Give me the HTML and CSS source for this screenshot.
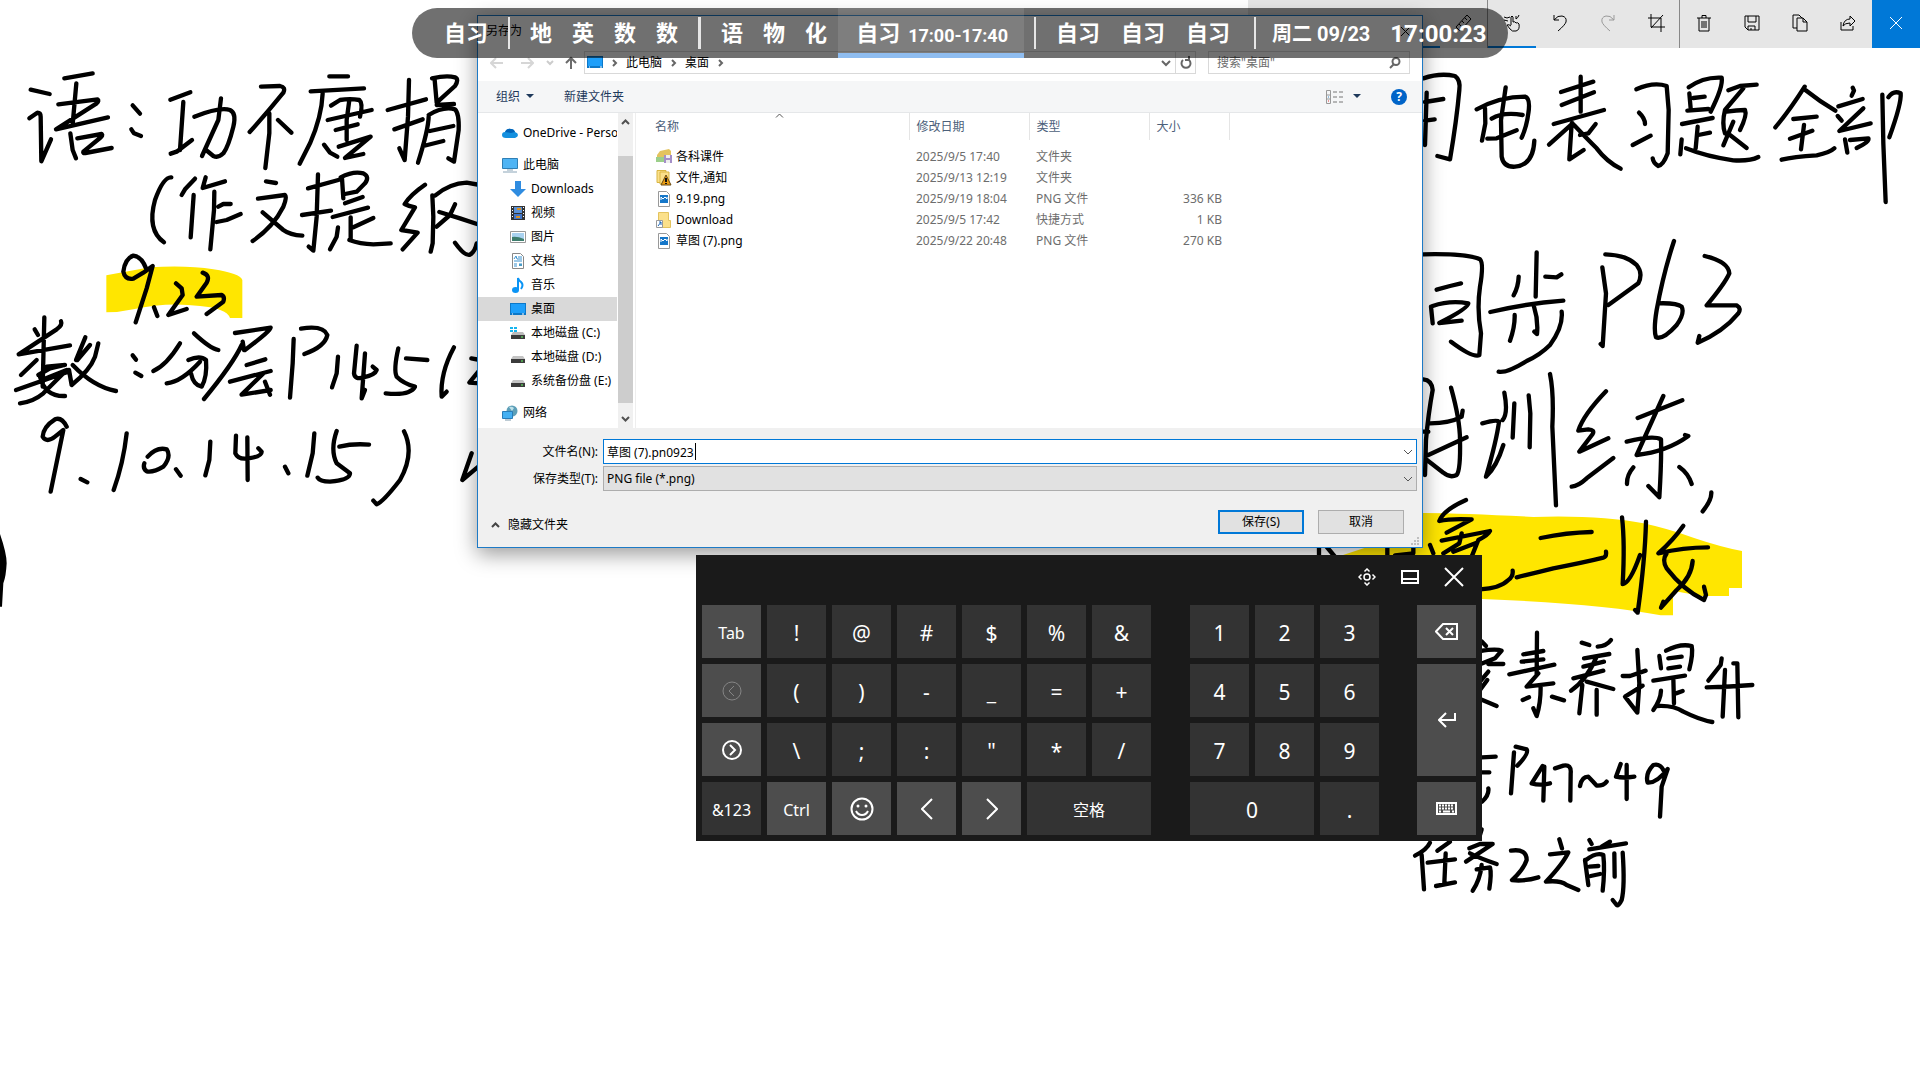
FILE: index.html
```html
<!DOCTYPE html>
<html lang="zh-CN">
<head>
<meta charset="utf-8">
<meta name="viewport" content="width=device-width, initial-scale=1">
<title>草图</title>
<link rel="stylesheet" href="styles.css">
</head>
<body>
<main class="desktop">

<svg class="ink" role="img" aria-label="手写作业草图">
  <!-- left notes, upper -->
  <svg x="0" y="50" width="490" height="240" viewBox="0 0 1470 720" overflow="visible">
    <path class="marker" d="M319 676L450 652Q560 645 640 658Q720 670 727 690V804H690Q680 775 600 768Q500 755 400 778Q360 787 319 787Z"/>
    <path d="M92 119L149 132M88 205L112 188Q122 188 122 200L124 334L153 268M193 85L278 70M229 100L218 222M175 163L293 148Q298 152 290 160L168 238L324 202M211 250L218 300L228 325M232 265L305 252Q310 256 300 264L250 305Q248 310 256 309L335 294M398 166L420 191M394 238L402 250L423 258"/>
    <path d="M511 149L571 127M550 156L540 300M512 311L530 305L576 270M663 145L655 210L606 318M583 200Q660 170 690 180Q710 190 700 230Q685 290 670 310Q655 325 640 318L618 300"/>
    <path d="M783 110L840 108Q858 112 850 128Q800 190 749 246M808 190V250L796 354M834 210L874 248"/>
    <path d="M988 79H1044M932 124L1092 115M968 130Q965 200 930 280L899 341M993 167L1020 150Q1050 145 1078 150Q1090 160 1080 200M983 210L1115 180M1048 150L1040 210V270M1007 240L1073 223M1016 290L1112 260L1035 324L1090 312M972 284L990 308L1012 320"/>
    <path d="M1227 90L1224 200L1214 330L1198 295M1163 180L1278 148M1183 238L1268 208M1296 85Q1340 75 1365 82Q1378 88 1365 108L1310 158L1304 90M1310 165L1362 162M1286 200Q1285 240 1254 338M1286 195Q1330 168 1365 178Q1378 190 1376 240L1362 335L1345 325M1290 243L1360 228M1270 288L1330 273"/>
    <path d="M514 382Q490 380 465 450Q440 540 492 577M585 386L555 418L545 435M581 435L572 562M617 382L608 414L675 394M643 425L642 480L631 598M655 470L670 462H692M650 516L680 510L722 492"/>
    <path d="M798 394L828 399M774 446L855 435Q862 440 850 470Q820 530 758 573M788 487L850 540Q870 555 907 557"/>
    <path d="M954 373L950 500L940 602L926 590M924 415L1015 390M906 495L993 482M1022 382Q1060 362 1090 370Q1110 380 1095 400L1070 425L1035 432M1026 385L1030 445M1035 460L1088 441M998 501L1104 473M1052 502V570M1060 532L1120 504M1014 532L1010 560L990 598M1048 570Q1080 582 1120 583L1172 580"/>
    <path d="M1275 404Q1230 435 1214 462Q1225 468 1245 472L1204 540L1253 548L1208 598M1297 436L1300 500L1298 580L1292 605M1306 436Q1350 400 1400 398L1440 405M1318 486L1380 505L1440 525M1365 463L1350 495L1310 530M1365 578Q1395 620 1410 614Q1425 605 1430 580"/>
    <path d="M438 655Q425 620 400 617Q375 625 370 665Q375 690 400 686L430 668L458 648L440 715L407 817M462 772L472 798M528 700L545 715L548 735L505 795L560 777M608 668Q632 676 620 698L590 740L665 735Q675 740 670 755L620 792"/>
  </svg>
  <!-- left notes, lower -->
  <svg x="0" y="290" width="490" height="330" viewBox="0 0 1470 990" overflow="visible">
    <path d="M133 82L128 290M104 118L114 135M183 94Q188 105 170 118L56 193L210 166M110 210L63 255M48 300L205 245M115 255L150 235L195 225L140 230M125 270L200 240L130 310Q100 335 60 340M120 260Q135 320 195 318M256 142L228 210M295 160L285 200Q270 240 215 285L207 240M232 210L270 165M218 225Q280 290 348 303M398 196L408 209M406 248L424 258"/>
    <path d="M540 160Q500 225 460 243M582 130Q630 175 655 180M565 210Q600 195 618 210Q622 260 605 290Q580 285 573 250M600 215Q545 275 500 280"/>
    <path d="M705 129L812 113Q815 120 735 180M728 155L732 180M725 165Q700 220 612 327M740 225L796 208M690 275L812 243M790 250L725 314L812 300M795 275L810 314"/>
    <path d="M881 147L878 220L870 323M903 116Q970 105 982 135Q975 170 913 192M1014 200L1010 250L996 292M1070 167L1062 250Q1065 270 1090 262Q1125 255 1130 240L1118 230M1095 190L1085 325L1095 300M1195 175Q1180 240 1190 260Q1210 280 1245 290Q1230 318 1157 310M1218 205L1282 210M1362 172Q1320 250 1325 320L1340 305M1414 205L1440 210M1435 245L1408 278L1440 280"/>
    <path d="M200 410Q185 380 165 388Q130 410 128 440Q140 460 165 440L190 420Q180 470 152 605M242 567L262 577M380 430Q370 520 341 600M443 500Q470 470 500 478Q515 500 490 530Q460 548 440 544Q428 535 433 520M528 538L542 557M631 455L628 510L616 556M708 437L706 490Q715 510 745 505Q785 500 785 485L775 475M742 442L743 570M855 530L865 550M943 430L938 490L922 557M1010 423Q990 480 1010 520L1050 550Q1050 570 990 575Q960 575 953 563M1018 470Q1060 460 1107 464M1212 424Q1245 490 1200 570Q1150 635 1130 643L1120 632M1415 490L1387 570L1435 530"/>
    <path class="blot" d="M0 732Q20 790 20 820Q18 860 10 880L6 950H0Z"/>
  </svg>
  <!-- right notes, upper -->
  <svg x="1400" y="60" width="520" height="320" viewBox="0 0 1560 960" overflow="visible">
    <path d="M70 55Q120 38 165 48Q182 60 178 90Q170 180 150 298L112 288M80 98L75 255M75 126L130 117M75 182L104 178"/>
    <path d="M317 82L303 180L305 290Q310 322 345 320Q400 315 403 242M230 148Q300 110 375 110Q392 115 385 160Q380 200 365 233M255 145L256 190L246 242M275 176Q310 155 368 165M262 236L290 235L350 211"/>
    <path d="M483 96L580 65M542 50V155M485 135L582 97M461 192L612 150M518 190L447 254M515 190L508 298L551 270M522 195Q560 235 590 265Q620 305 662 326M540 225L565 220L587 192"/>
    <path d="M709 88Q760 65 800 78L806 150L803 280Q790 315 775 318Q760 310 758 295M717 158Q735 175 735 192M698 255L752 227"/>
    <path d="M866 82Q910 50 965 53Q970 80 932 155M868 100L872 145M880 114L914 110M862 152L925 147M846 192L938 174M893 200L887 265M895 225L930 218M845 238L841 283M858 265Q920 290 1000 301Q1050 304 1075 291M985 91L1020 78L1070 74M1030 85L975 150Q965 190 975 220M980 155Q1010 150 1035 150Q1042 165 1020 210M1000 185L970 256M990 225L1040 264"/>
    <path d="M1214 80Q1170 150 1126 202M1216 90Q1260 125 1306 152M1180 177L1250 170M1212 195L1203 268M1170 236L1237 212M1145 299Q1180 290 1250 286Q1290 278 1303 265"/>
    <path d="M1358 83L1362 92L1355 107M1315 139L1388 117M1313 168L1325 182M1390 145L1318 213L1412 190M1335 238L1342 278M1350 240L1405 235Q1410 245 1370 264M1447 104L1450 250L1457 426M1465 112Q1480 90 1502 100Q1505 130 1468 232"/>
    <path d="M70 583Q200 580 240 598Q252 610 240 680Q230 750 243 820L238 885Q220 895 153 845M110 689L150 678L183 670M93 740L98 790M98 738Q150 720 205 730Q205 745 118 789L185 782"/>
    <path d="M410 577L407 710M356 650Q355 680 341 706M436 650L470 652L484 643M271 756Q380 730 490 722M344 765Q345 800 330 842M402 740Q415 780 411 822L403 815M485 755Q490 800 450 855Q420 885 380 903Q320 940 296 935"/>
    <path d="M607 622L618 700L608 858L602 852M616 583Q680 585 710 615Q730 640 715 670L625 735M822 543Q790 640 770 750Q760 810 768 832Q790 840 830 795Q855 760 845 740Q830 728 775 730M914 588Q985 605 988 640Q975 670 920 736H1010Q1025 745 1015 760Q970 815 893 848L898 828"/>
  </svg>
  <!-- right notes, middle -->
  <svg x="1300" y="360" width="500" height="270" viewBox="0 0 1500 810" overflow="visible">
    <path class="marker" d="M120 588L200 562L370 459Q500 460 700 471Q900 465 1030 490Q1100 505 1180 533Q1260 560 1326 573V684H1287V708H1205Q1160 700 1119 692V766H1082Q900 730 546 717L300 700Z"/>
    <path d="M370 58Q395 60 398 90Q385 160 378 240L375 345M453 83Q480 180 480 240Q482 330 470 345Q450 355 430 338L378 298M390 190Q450 190 485 170L488 152M385 285L500 232M370 215H385"/>
    <path d="M547 190Q590 178 597 185Q590 240 558 350Q590 320 610 255M613 98Q625 160 608 180M643 130L638 233M686 106L691 160L689 262M750 42Q762 100 757 200L768 436"/>
    <path d="M918 94Q850 165 835 212L865 208Q885 210 878 222L838 275L925 235M815 380Q835 378 860 355L940 294M1090 108L1010 285Q1100 275 1165 228L1155 225M1013 174L1147 121M980 245Q1060 225 1083 238Q1085 300 1078 412L1045 378M1000 322Q980 345 981 372M1138 321Q1165 340 1175 372M1234 397Q1235 420 1208 454"/>
    <path d="M498 420Q430 450 418 483Q450 475 515 478L440 518M425 542L570 513Q565 525 535 540L515 590M485 520L478 550L430 580M390 555L400 580M460 575L530 548M540 688Q600 685 625 660Q640 650 638 632"/>
    <path d="M722 534Q800 518 875 516M650 652Q700 640 760 625Q850 608 910 593Q920 590 918 575"/>
    <path d="M966 472Q975 550 968 672Q990 670 1020 585M1038 485Q1035 600 1013 758L1005 750M1150 497Q1120 540 1075 580Q1150 562 1224 562M1100 580Q1085 600 1100 625Q1150 690 1212 720L1218 705L1212 680M1178 603Q1175 650 1130 690L1083 743L1090 725"/>
    <path d="M57 555V600M78 558L108 594M262 555V600M285 586L340 580V555"/>
  </svg>
  <!-- right notes, lower -->
  <svg x="1380" y="620" width="420" height="300" viewBox="0 0 1260 900" overflow="visible">
    <path d="M306 65L318 78M300 93Q350 85 365 92L345 115L300 133M325 132H370M325 155L300 185M322 180L300 210M300 237L350 258"/>
    <path d="M471 38L470 165M430 103L490 93M425 125L490 118M388 163L523 134M475 160L440 200L520 190M482 200Q482 250 470 288L460 265M428 240L447 232M516 230L552 241"/>
    <path d="M605 68L628 75M653 80Q680 78 693 60M612 115L688 102M610 140L672 125M580 175L670 152M650 110Q620 180 573 212M620 185L700 207M607 195L598 280M650 210V284"/>
    <path d="M772 90L778 190L772 278L735 230L788 197M728 168H750L797 152M838 108L843 145M858 92Q900 70 935 78Q940 100 928 148M865 115L905 110M865 145L900 140M820 182L915 167M880 175L882 250M888 220L908 213M843 212Q842 240 820 270M830 258Q880 255 910 275Q960 300 997 306"/>
    <path d="M1025 115L1022 135L985 182M1035 150L1028 290M980 202Q1050 200 1117 195M1060 130H1072L1075 292"/>
    <path d="M306 412L347 410M306 457H328M325 505Q328 525 306 545M402 397L393 520M407 380L440 388Q448 400 412 437M488 438L455 490Q480 498 510 490M493 440L490 542M525 445L550 437Q575 432 572 460L571 542M600 498Q605 470 625 470Q640 485 650 497Q670 498 680 485M722 432L708 470Q730 475 763 470M740 435V537M850 450Q840 430 820 435Q795 460 803 488Q830 490 863 447L845 500L840 590"/>
    <path d="M150 668Q140 690 105 707M125 705L132 808M210 665L172 692M143 728L225 718M197 700L193 790M168 798L225 787M305 628L300 645M268 685L300 672H338L258 725M270 700Q300 715 350 732M290 748L330 742Q335 760 328 806M305 735Q300 780 278 812"/>
    <path d="M393 692Q440 685 440 720Q430 750 396 780Q430 785 475 772M538 658L546 685M510 703L565 697Q550 730 498 785Q540 780 560 795L595 810"/>
    <path d="M628 660L635 672M690 665L665 680M628 688L738 670M615 720L625 795M618 720Q650 695 670 705Q675 750 668 812M628 740L655 738M632 768L660 762M703 700L704 770M728 698Q735 800 725 840Q715 860 710 855L698 840"/>
  </svg>
</svg>

<nav class="sketchbar" aria-label="草图工具">
  <button class="tool" aria-label="圆珠笔"></button>
  <button class="tool" aria-label="铅笔"></button>
  <button class="tool" aria-label="荧光笔"></button>
  <button class="tool selected" aria-label="橡皮擦"></button>
  <button class="tool" aria-label="标尺"><svg width="18" height="18" viewBox="0 0 18 18"><path d="M1 13L12 1L16 5L5 17ZM4 10l2 2M7 7l2 2M10 4l2 2"/></svg></button>
  <button class="tool selected divided" aria-label="触摸书写"><svg width="18" height="18" viewBox="0 0 18 18"><path d="M1 3q3 2 6 0M1 6l4 1M8 11V3q1-2 2 0v5q2-1 3 1 2-1 3 1 1 6-3 7-4 1-6-2l-3-4q2-1 4 1M16 1q-1 3-3 4v-3"/></svg></button>
  <button class="tool" aria-label="撤消"><svg width="18" height="18" viewBox="0 0 18 18"><path d="M3 1v5h5M3 6q4-5 8-4 5 1 4 6-1 3-8 9"/></svg></button>
  <button class="tool dim" aria-label="恢复"><svg width="18" height="18" viewBox="0 0 18 18"><path d="M15 1v5h-5M15 6q-4-5-8-4-5 1-4 6 1 3 8 9"/></svg></button>
  <button class="tool" aria-label="裁剪"><svg width="18" height="18" viewBox="0 0 18 18"><path d="M4 0v13h14M1 4h13v14M4 14L16 1"/></svg></button>
  <button class="tool divided" aria-label="清除"><svg width="18" height="18" viewBox="0 0 18 18"><path d="M2 4h14M7 4V1.500h4V4M4 4v13h10V4M7 7v7M9 7v7M11 7v7"/></svg></button>
  <button class="tool" aria-label="保存"><svg width="18" height="18" viewBox="0 0 18 18"><path d="M2 2h14v14H5l-3-3ZM5 2v6h8V2M5 16v-4h7v4M8 14v2"/></svg></button>
  <button class="tool" aria-label="复制"><svg width="18" height="18" viewBox="0 0 18 18"><path d="M6 14H2V1h6l3 3M6 4h6l4 4v9H6ZM12 4v4h4"/></svg></button>
  <button class="tool" aria-label="共享"><svg width="18" height="18" viewBox="0 0 18 18"><path d="M2 8v8h12v-4M4 12q1-7 7-7V2l5 5-5 5V9q-5 0-7 3Z"/></svg></button>
  <button class="tool exit" aria-label="关闭"><svg width="18" height="18" viewBox="0 0 18 18"><path d="M3 3l12 12M15 3L3 15"/></svg></button>
</nav>

<section class="dialog" role="dialog" aria-label="另存为">
  <header class="titlebar"><span>另存为</span><button class="plain" aria-label="关闭"><svg width="11" height="11" viewBox="0 0 11 11"><path d="M1 1l9 9M10 1l-9 9" stroke="#000"/></svg></button></header>
  <div class="navrow">
    <button class="plain back" aria-label="后退"><svg width="14" height="12" viewBox="0 0 14 12"><path d="M6 1L1 6l5 5M1 6h12" stroke="#d6d6d6" stroke-width="2"/></svg></button>
    <button class="plain forward" aria-label="前进"><svg width="14" height="12" viewBox="0 0 14 12"><path d="M8 1l5 5-5 5M13 6H1" stroke="#d6d6d6" stroke-width="2"/></svg></button>
    <button class="plain recent" aria-label="最近位置"><svg width="8" height="6" viewBox="0 0 8 6"><path d="M1 1l3 3 3-3" stroke="#ccc" stroke-width="2"/></svg></button>
    <button class="plain up" aria-label="上移"><svg width="13" height="14" viewBox="0 0 13 14"><path d="M1 7l5-5 5 5M6 2v11" stroke="#6b6b6b" stroke-width="2"/></svg></button>
    <div class="address">
      <svg width="16" height="13" viewBox="0 0 16 13"><path d="M0 0h16v12H0z" fill="#0d78c8"/><path d="M1 1h14v9H1z" fill="#1e9ffa"/><path d="M2 11h1M13 11h2" stroke="#fff"/></svg>
      <svg class="crumb" width="6" height="8" viewBox="0 0 6 8"><path d="M1 1l3 3-3 3" stroke="#666" stroke-width="2"/></svg>
      <a href="#pc">此电脑</a>
      <svg class="crumb" width="6" height="8" viewBox="0 0 6 8"><path d="M1 1l3 3-3 3" stroke="#666" stroke-width="2"/></svg>
      <a href="#desk">桌面</a>
      <svg class="crumb" width="6" height="8" viewBox="0 0 6 8"><path d="M1 1l3 3-3 3" stroke="#666" stroke-width="2"/></svg>
      <button class="plain history" aria-label="历史"><svg width="10" height="8" viewBox="0 0 10 8"><path d="M1 2l4 4 4-4" stroke="#666" stroke-width="2"/></svg></button>
      <button class="plain reload" aria-label="刷新"><svg width="12" height="14" viewBox="0 0 12 14"><path d="M3 4a4.500 4.500 0 1 0 6 0M9 0v4H5" stroke="#666" stroke-width="2"/></svg></button>
    </div>
    <label class="search"><input type="search" placeholder='搜索"桌面"' aria-label="搜索桌面"><svg width="12" height="12" viewBox="0 0 12 12"><circle cx="7" cy="4.500" r="3.500" stroke="#666" stroke-width="2"/><path d="M5 7L1 11" stroke="#666" stroke-width="2"/></svg></label>
  </div>
  <div class="commands">
    <button class="plain cmd">组织<svg width="8" height="5" viewBox="0 0 8 5"><path d="M0 0h8L4 4z" fill="#1e395b"/></svg></button>
    <button class="plain cmd">新建文件夹</button>
    <button class="plain cmd view" aria-label="更改视图"><svg width="17" height="14" viewBox="0 0 17 14"><path d="M.5.500h4v13h-4zM.5 5h4M.5 9h4" stroke="#999"/><path d="M7 2h4M13 2h4M7 7h4M13 7h4M7 12h4M13 12h4" stroke="#777"/><path d="M2 7h1" stroke="#38c"/><path d="M2 11h1" stroke="#d33"/></svg><svg width="8" height="5" viewBox="0 0 8 5"><path d="M0 0h8L4 4z" fill="#1e395b"/></svg></button>
    <button class="plain help" aria-label="帮助">?</button>
  </div>
  <div class="browser">
    <ul class="tree">
      <li class="gap"><svg width="16" height="16" viewBox="0 0 16 16"><path d="M4 13Q0 13 0 10T3 7Q5 3 9 4q3 0 4 3 3 1 3 3t-3 3z" fill="#1490df"/><path d="M3 7Q5 3 9 4q3 0 4 3L9 8z" fill="#0364b8"/></svg>OneDrive - Personal</li>
      <li><svg width="16" height="16" viewBox="0 0 16 16"><path d="M.5 1.500h15v10H.5z" fill="#4fb4f4" stroke="#2f7fb5"/><path d="M5 13h6M1 15h14" stroke="#8aa5b8"/></svg>此电脑</li>
      <li class="sub"><svg width="16" height="16" viewBox="0 0 16 16"><path d="M5 0h6v8h5l-8 8-8-8h5z" fill="#2f8ce0"/></svg>Downloads</li>
      <li class="sub"><svg width="16" height="16" viewBox="0 0 16 16"><path d="M1 1h14v14H1z" fill="#333"/><path d="M4 2h8v6H4z" fill="#5b92d8"/><path d="M4 9h8v5H4z" fill="#4276c8"/><path d="M7 3h4v2H7zM6 11h4v2H6z" fill="#d99022"/><path d="M2.500 2v12M13.500 2v12" stroke="#fff" stroke-dasharray="1 2"/></svg>视频</li>
      <li class="sub"><svg width="16" height="16" viewBox="0 0 16 16"><path d="M.5 2.500h15v11H.5z" fill="#fff" stroke="#999"/><path d="M2 4h12v8H2z" fill="#a9d2f0"/><path d="M2 8q5-1 12 2v2H2z" fill="#3d7d6d"/></svg>图片</li>
      <li class="sub"><svg width="16" height="16" viewBox="0 0 16 16"><path d="M2.500.500h8l3 3v12h-11z" fill="#fff" stroke="#888"/><path d="M8 4h4M7 6h5M4 8h8M4 11h3M4 13h3M9 11h3" stroke="#3a92cf"/><path d="M4 6l2-3 1 3" stroke="#3a92cf"/><path d="M9 11h3v2H9z" fill="#4b9cc5"/></svg>文档</li>
      <li class="sub"><svg width="16" height="16" viewBox="0 0 16 16"><ellipse cx="5.500" cy="13" rx="3.500" ry="3" fill="#0a94f5"/><path d="M8 13V1q1 3 3 4 3 3 0 7" stroke="#0a94f5" stroke-width="2"/></svg>音乐</li>
      <li class="sub current"><svg width="16" height="16" viewBox="0 0 16 16"><path d="M0 2h16v12H0z" fill="#0d78c8"/><path d="M1 3h14v9H1z" fill="#1e9ffa"/><path d="M2 13h1M12 13h2" stroke="#fff"/></svg>桌面</li>
      <li class="sub"><svg width="16" height="16" viewBox="0 0 16 16"><path d="M0 2h3v2H0zM4 2h3v2H4zM0 5h3v2H0zM4 5h3v2H4z" fill="#16b5ef"/><path d="M3 7h10l2 3H1z" fill="#bbb"/><path d="M1 10h14v4H1z" fill="#3b3b3b"/><path d="M11 12h2" stroke="#6f6"/></svg>本地磁盘 (C:)</li>
      <li class="sub"><svg width="16" height="16" viewBox="0 0 16 16"><path d="M3 7h10l2 3H1z" fill="#c4c4c4"/><path d="M1 10h14v4H1z" fill="#3b3b3b"/><path d="M11 12h2" stroke="#6f6"/></svg>本地磁盘 (D:)</li>
      <li class="sub gap"><svg width="16" height="16" viewBox="0 0 16 16"><path d="M3 7h10l2 3H1z" fill="#c4c4c4"/><path d="M1 10h14v4H1z" fill="#3b3b3b"/><path d="M11 12h2" stroke="#6f6"/></svg>系统备份盘 (E:)</li>
      <li><svg width="16" height="16" viewBox="0 0 16 16"><circle cx="10" cy="6" r="5.500" fill="#5d9fb8"/><path d="M7 2q3-1 5 1l-2 3z" fill="#bfe2ea"/><path d="M.5 6.500h10v7H.5z" fill="#45b0f2" stroke="#2a7db8"/><path d="M3 15h6" stroke="#7c98aa"/></svg>网络</li>
    </ul>
    <div class="scroll" aria-hidden="true">
      <svg width="9" height="6" viewBox="0 0 9 6"><path d="M1 5l3.500-3.500L8 5" stroke="#505050" stroke-width="2"/></svg>
      <span class="thumb"></span>
      <svg width="9" height="6" viewBox="0 0 9 6"><path d="M1 1l3.500 3.500L8 1" stroke="#505050" stroke-width="2"/></svg>
    </div>
    <div class="files">
      <svg class="sorted" width="9" height="5" viewBox="0 0 9 5"><path d="M1 4.500L4.500 1 8 4.500" stroke="#555"/></svg>
      <table>
        <thead><tr><th class="c-name">名称</th><th class="c-date">修改日期</th><th class="c-type">类型</th><th class="c-size">大小</th></tr></thead>
        <tbody>
          <tr><td><span class="file"><svg width="16" height="16" viewBox="0 0 16 16"><path d="M4 2l9-2 2 2v7H1V6z" fill="#e3c35e"/><path d="M0 8h9v5H0z" fill="#9ccf8a"/><path d="M8 6h8v8H8z" fill="#a48fc8"/><path d="M10 6h4v3h-4zM10 11h4v3h-4z" fill="#eee"/></svg>各科课件</span></td><td>2025/9/5 17:40</td><td>文件夹</td><td></td></tr>
          <tr><td><span class="file"><svg width="16" height="16" viewBox="0 0 16 16"><path d="M1 .5h9v12H1z" fill="#fbe08a" stroke="#d9b542"/><path d="M4 2h9v12H4z" fill="#fbe08a" stroke="#d9b542"/><path d="M10 5l5 10H5z" fill="#e89c14" stroke="#6b4a12"/><path d="M10 8v4M10 13v1" stroke="#111" stroke-width="2"/></svg>文件,通知</span></td><td>2025/9/13 12:19</td><td>文件夹</td><td></td></tr>
          <tr><td><span class="file"><svg width="16" height="16" viewBox="0 0 16 16"><path d="M2.500.500h8l3 3v12h-11z" fill="#fff" stroke="#999"/><path d="M4 4h8v8H4z" fill="#1577c9"/><path d="M5 9V6l2 2 2-2 2 2V6" stroke="#fff"/></svg>9.19.png</span></td><td>2025/9/19 18:04</td><td>PNG 文件</td><td>336 KB</td></tr>
          <tr><td><span class="file"><svg width="16" height="16" viewBox="0 0 16 16"><path d="M2.500.500h10v8h2v7h-12z" fill="#fbe08a" stroke="#e3c35e"/><path d="M.5 8.500h6v7h-6z" fill="#fff" stroke="#999"/><path d="M2 14l3-4M3 10h2v3" stroke="#1b66b8"/></svg>Download</span></td><td>2025/9/5 17:42</td><td>快捷方式</td><td>1 KB</td></tr>
          <tr><td><span class="file"><svg width="16" height="16" viewBox="0 0 16 16"><path d="M2.500.500h8l3 3v12h-11z" fill="#fff" stroke="#999"/><path d="M4 4h8v8H4z" fill="#1577c9"/><path d="M5 9V6l2 2 2-2 2 2V6" stroke="#fff"/></svg>草图 (7).png</span></td><td>2025/9/22 20:48</td><td>PNG 文件</td><td>270 KB</td></tr>
        </tbody>
      </table>
    </div>
  </div>
  <form class="form">
    <label for="fname">文件名(N):</label>
    <div class="field active"><input id="fname" type="text" value="草图 (7).pn0923"><i class="caret"></i><svg width="10" height="6" viewBox="0 0 10 6"><path d="M1 1l4 4 4-4" stroke="#555"/></svg></div>
    <label for="ftype">保存类型(T):</label>
    <div class="field"><select id="ftype"><option>PNG file (*.png)</option></select><svg width="10" height="6" viewBox="0 0 10 6"><path d="M1 1l4 4 4-4" stroke="#555"/></svg></div>
  </form>
  <footer class="actions">
    <button class="plain hide"><svg width="9" height="6" viewBox="0 0 9 6"><path d="M1 5l3.500-3.500L8 5" stroke="#444" stroke-width="2"/></svg>隐藏文件夹</button>
    <button class="btn default">保存(S)</button>
    <button class="btn">取消</button>
    <svg class="grip" width="9" height="9" viewBox="0 0 9 9"><path d="M6 0h2v2H6zM3 3h2v2H3zM6 3h2v2H6zM0 6h2v2H0zM3 6h2v2H3zM6 6h2v2H6z" fill="#bfbfbf"/></svg>
  </footer>
</section>

<section class="keyboard" aria-label="触摸键盘">
  <div class="kbhead">
    <button class="plain" aria-label="移动"><svg width="18" height="18" viewBox="0 0 18 18"><circle cx="9" cy="9" r="3" stroke-width="1.500"/><path d="M6.500 3.500L9 1l2.500 2.500M6.500 14.500L9 17l2.500-2.500M3.500 6.500L1 9l2.500 2.500M14.500 6.500L17 9l-2.500 2.500" stroke-width="1.500"/></svg></button>
    <button class="plain" aria-label="停靠"><svg width="18" height="14" viewBox="0 0 18 14"><path d="M1 1h16v12H1zM1 9h16" stroke-width="2"/></svg></button>
    <button class="plain" aria-label="关闭键盘"><svg width="20" height="20" viewBox="0 0 20 20"><path d="M1 1l18 18M19 1L1 19" stroke-width="2"/></svg></button>
  </div>
  <div class="keys">
    <button class="key fn word first">Tab</button><button class="key">!</button><button class="key">@</button><button class="key">#</button><button class="key">$</button><button class="key">%</button><button class="key">&amp;</button><button class="key pad">1</button><button class="key">2</button><button class="key">3</button>
    <button class="key fn side" aria-label="退格"><svg width="23" height="17" viewBox="0 0 23 17"><path d="M8 1h14v15H8L1 8.500zM11 5l7 7M18 5l-7 7" stroke-width="2"/></svg></button>
    <button class="key fn off first" aria-label="上一页"><svg width="20" height="20" viewBox="0 0 20 20"><circle cx="10" cy="10" r="9"/><path d="M12 5l-5 5 5 5"/></svg></button><button class="key">(</button><button class="key">)</button><button class="key">-</button><button class="key">_</button><button class="key">=</button><button class="key">+</button><button class="key pad">4</button><button class="key">5</button><button class="key">6</button>
    <button class="key fn side tall" aria-label="回车"><svg width="18" height="16" viewBox="0 0 18 16"><path d="M17 1v7H1M8 1L1 8l7 7" stroke-width="2"/></svg></button>
    <button class="key fn first" aria-label="下一页"><svg width="20" height="20" viewBox="0 0 20 20"><circle cx="10" cy="10" r="9" stroke-width="2"/><path d="M8 5l5 5-5 5" stroke-width="2"/></svg></button><button class="key">\</button><button class="key">;</button><button class="key">:</button><button class="key">"</button><button class="key">*</button><button class="key">/</button><button class="key pad">7</button><button class="key">8</button><button class="key">9</button>
    <button class="key word first">&amp;123</button><button class="key fn word">Ctrl</button>
    <button class="key fn" aria-label="表情"><svg width="24" height="24" viewBox="0 0 24 24"><circle cx="12" cy="12" r="10.500" stroke-width="2"/><path d="M6 14q2 4 6 4t6-4" stroke-width="2"/><circle cx="8" cy="9" r="1.500" fill="#fff" stroke="none"/><circle cx="16" cy="9" r="1.500" fill="#fff" stroke="none"/></svg></button>
    <button class="key fn" aria-label="左"><svg width="12" height="22" viewBox="0 0 12 22"><path d="M11 1L1 11l10 10" stroke-width="2"/></svg></button>
    <button class="key fn" aria-label="右"><svg width="12" height="22" viewBox="0 0 12 22"><path d="M1 1l10 10L1 21" stroke-width="2"/></svg></button>
    <button class="key wide word">空格</button><button class="key pad wide">0</button><button class="key">.</button>
    <button class="key fn side" aria-label="键盘布局"><svg width="21" height="13" viewBox="0 0 21 13"><path d="M1 1h19v11H1z" stroke-width="2"/><path d="M3 3.500h15M3 6.500h15" stroke-dasharray="2 1" stroke-width="2"/><path d="M3 9.500h2M7 9.500h7M16 9.500h2" stroke-width="2"/></svg></button>
  </div>
</section>

<section class="schedule" aria-label="课程表">
  <span>自习</span><i class="bar"></i>
  <span>地</span><span>英</span><span>数</span><span>数</span><i class="bar thick"></i>
  <span>语</span><span>物</span><span>化</span>
  <span class="now">自习<time>17:00-17:40</time></span><i class="bar"></i>
  <span class="later">自习<span>自习</span><span>自习</span></span><i class="bar"></i>
  <span class="date">周二 09/23</span><time class="clock">17:00:23</time>
</section>

</main>
</body>
</html>
```
FILE: styles.css
```css
* { box-sizing: border-box; }

body {
  margin: 0;
  background: #fff;
  color: #000;
  font: 12px/16px "Noto Sans", "Noto Sans CJK SC", sans-serif;
}

button, input, select { font: inherit; color: inherit; margin: 0; }
svg { display: block; flex: none; fill: none; }
.plain { border: 0; padding: 0; background: none; display: flex; align-items: center; }

.desktop { position: relative; min-height: 100vh; overflow: hidden; }

/* handwriting canvas */
.ink { position: absolute; inset: 0; width: 100%; height: 100%; }
.ink svg { display: inline; }
.ink path { fill: none; stroke: #000; stroke-width: 13; stroke-linecap: round; stroke-linejoin: round; }
.ink .marker { fill: #ffe600; stroke: none; }
.ink .blot { fill: #000; stroke: none; }

/* sketch toolbar */
.sketchbar { position: absolute; top: 0; right: 0; display: flex; height: 48px; background: #e6e6e6; }
.tool { width: 48px; border: 0; padding: 0 0 2px; background: none; display: flex; align-items: center; justify-content: center; stroke: #000; }
.tool.selected { border-bottom: 2px solid #0078d7; padding-bottom: 0; }
.tool.divided { box-shadow: -1px 0 #888; }
.tool.dim { stroke: #999; }
.tool.exit { background: #0078d7; stroke: #fff; }

/* save dialog */
.dialog { position: absolute; left: 477px; top: 15px; width: 946px; background: #fff; border: 1px solid #1d7ac6; box-shadow: 0 6px 20px rgba(0, 0, 0, .4); }
.titlebar { display: flex; justify-content: space-between; align-items: center; height: 30px; padding: 0 11px 0 8px; }
.navrow { display: flex; align-items: center; height: 35px; padding: 5px 12px 7px; }
.back { width: 30px; }
.forward { width: 26px; }
.recent { width: 19px; }
.up { width: 19px; }
.address { flex: 1; display: flex; align-items: center; height: 23px; border: 1px solid #d9d9d9; padding-left: 2px; margin-right: 12px; }
.address a { color: #000; text-decoration: none; }
.crumb { margin: 0 8px 0 9px; }
.history { margin-left: auto; width: 14px; height: 100%; }
.reload { width: 20px; height: 100%; justify-content: center; border-left: 1px solid #d9d9d9; }
.search { display: flex; align-items: center; width: 202px; height: 23px; border: 1px solid #d9d9d9; padding: 0 8px; }
.search input { flex: 1; min-width: 0; border: 0; padding: 0; outline: 0; background: none; appearance: none; }
.search input::placeholder { color: #6d6d6d; opacity: 1; }
.commands { display: flex; align-items: center; height: 32px; padding: 0 15px 0 18px; background: #f5f6f7; border-bottom: 1px solid #e5e7e9; color: #1e395b; }
.cmd { gap: 6px; margin-right: 30px; }
.view { gap: 10px; margin-left: auto; }
.help { width: 16px; height: 16px; border-radius: 8px; background: #0064c8; color: #fff; font-weight: 700; justify-content: center; }

.browser { display: flex; height: 315px; }
.tree { list-style: none; margin: 0; padding: 8px 0 0; width: 139px; overflow: hidden; }
.tree li { display: flex; align-items: center; gap: 5px; height: 24px; padding-left: 24px; white-space: nowrap; overflow: hidden; }
.tree .sub { padding-left: 32px; }
.tree .gap { margin-bottom: 8px; }
.tree .current { background: #d9d9d9; }
.scroll { width: 15px; margin-left: 1px; padding: 6px 0; background: #f0f0f0; display: flex; flex-direction: column; align-items: center; justify-content: space-between; }
.thumb { width: 15px; flex: 1; margin: 31px 0 13px; background: #cdcdcd; }
.files { flex: 1; margin-left: 2px; border-left: 1px solid #eee; position: relative; }
.sorted { position: absolute; left: 139px; top: 0; }
table { border-collapse: collapse; table-layout: fixed; width: 593px; }
th { height: 27px; padding: 0 6px 0 7px; text-align: left; font-weight: 400; color: #4c607a; border-right: 1px solid #e5e5e5; }
.c-name { width: 273px; padding-left: 19px; }
.c-date, .c-type { width: 120px; }
.c-size { width: 80px; }
td { height: 21px; padding: 0 7px; color: #6d6d6d; white-space: nowrap; }
td:first-child { padding-left: 20px; color: #000; }
td:last-child { text-align: right; }
tbody::before { content: ""; display: block; height: 6px; }
.file { display: flex; align-items: center; gap: 4px; }

.form { display: grid; grid-template-columns: 120px 1fr; gap: 2px 5px; align-items: center; padding: 11px 5px 0 0; background: #f0f0f0; }
.form label { text-align: right; }
.field { position: relative; display: flex; align-items: center; height: 25px; padding-right: 3px; background: #e1e1e1; border: 1px solid #adadad; }
.field.active { background: #fff; border-color: #0078d7; }
.field input, .field select { flex: 1; height: 21px; border: 0; padding: 0 0 0 3px; background: none; outline: 0; appearance: none; }
.caret { position: absolute; left: 91px; top: 3px; width: 1px; height: 17px; background: #000; }
.actions { display: flex; align-items: flex-start; height: 56px; padding: 19px 18px 0 13px; background: #f0f0f0; position: relative; }
.hide { gap: 8px; margin-right: auto; height: 30px; }
.btn { width: 86px; height: 24px; padding: 0; margin-left: 14px; background: #e1e1e1; border: 1px solid #adadad; }
.btn.default { border: 2px solid #0078d7; }
.grip { position: absolute; right: 2px; bottom: 1px; }

/* touch keyboard */
.keyboard { position: absolute; left: 696px; top: 555px; width: 786px; padding: 0 6px 6px; background: #1a1a1a; color: #fff; stroke: #fff; }
.kbhead { display: flex; justify-content: flex-end; align-items: center; height: 50px; padding: 0 12px 6px 0; gap: 25px; }
.keys { display: grid; grid-template-columns: repeat(7, 59fr) 27fr repeat(3, 59fr) 26fr 59fr; grid-auto-rows: 53px; gap: 6px; }
.key { min-width: 0; border: 0; padding: 3px 0 0; background: #333; font-size: 21px; line-height: 28px; display: flex; align-items: center; justify-content: center; }
.key svg { margin-bottom: 3px; }
.key.fn { background: #4d4d4d; }
.key.off { stroke: #858585; }
.key.word { font-size: 16px; }
.key.first { grid-column: 1; }
.key.pad { grid-column: 9; }
.key.side { grid-column: 13; }
.key.tall { grid-row: 2 / span 2; }
.key.wide { grid-column: span 2; }
.key.pad.wide { grid-column: 9 / span 2; }

/* timetable pill */
.schedule { position: absolute; top: 8px; left: 50%; transform: translateX(-50%); width: 1096px; height: 50px; padding: 0 20px 0 32px; display: flex; align-items: center; gap: 20px; border-radius: 25px; background: rgba(0, 0, 0, .56); color: #fff; font: 700 22px/30px Roboto, "Noto Sans CJK SC", sans-serif; white-space: nowrap; overflow: hidden; }
.schedule > * { flex: none; }
.schedule > span, .clock { padding-top: 2px; }
.bar { width: 2px; height: 32px; background: #e6e6e6; }
.bar.thick { width: 3px; }
.schedule > .now { display: flex; align-items: center; gap: 8px; height: 50px; margin: 0 -10px 0 -9px; padding: 7px 16px 0 18px; background: rgba(255, 255, 255, .1); border-bottom: 5px solid #8fbdf0; }
.now time { font-size: 18px; padding-top: 4px; }
.later { display: flex; gap: 21px; margin-right: 4px; }
.date { font-size: 20px; margin-left: -4px; }
.clock { font-size: 24px; }
```
